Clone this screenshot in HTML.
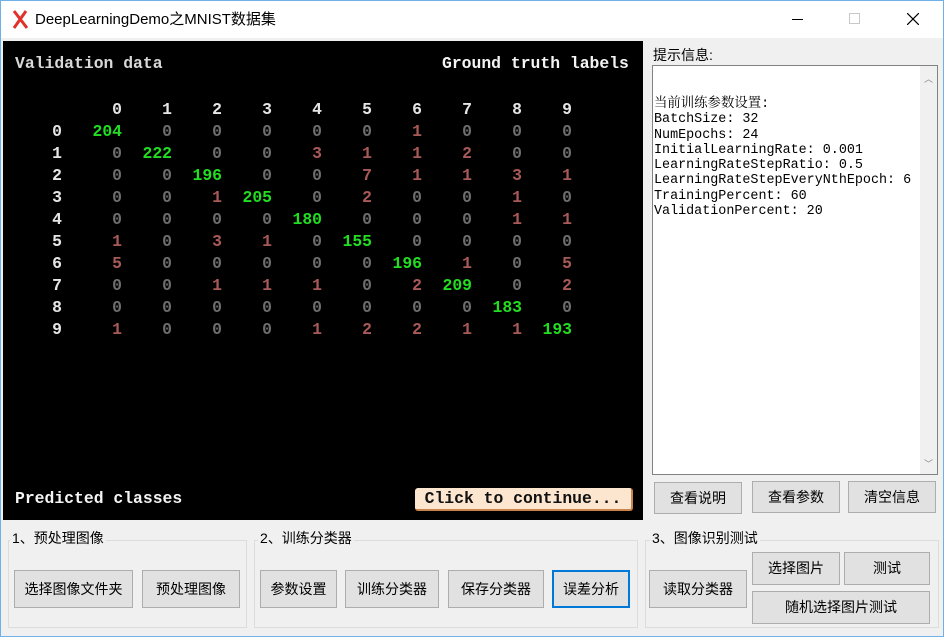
<!DOCTYPE html>
<html><head><meta charset="utf-8"><style>
*{margin:0;padding:0;box-sizing:border-box}
body{width:944px;height:637px;overflow:hidden;background:#f0f0f0;font-family:"Liberation Sans","Noto Sans CJK SC",sans-serif;position:relative;font-size:14px;color:#000}
.win{position:absolute;left:0;top:0;width:944px;height:637px;border:1px solid #6fb0e6}
.title{position:absolute;left:1px;top:1px;width:942px;height:37px;background:#fff}
.abs{position:absolute}
.blk{position:absolute;left:3px;top:41px;width:640px;height:479px;background:#000;font-family:"Liberation Mono",monospace;font-weight:bold;font-size:16.4px}
.row{position:absolute;left:0;height:22px;line-height:22px;white-space:pre}
.row span{position:absolute;width:50px;text-align:right}
.w{color:#e6e6e6}.g{color:#22dd22}.d{color:#6e6e6e}.r{color:#a85a58}
.btn{position:absolute;background:#e1e1e1;border:1px solid #adadad;text-align:center;font-size:14px;color:#000;font-family:"Liberation Sans","Noto Sans CJK SC",sans-serif}
.grp{position:absolute;border:1px solid #dcdcdc}
.gl{position:absolute;background:#f0f0f0;font-size:14px;padding:0 2px;line-height:16px}
</style></head><body>
<div class="win"></div>
<div class="title">
<svg class="abs" style="left:11px;top:9px" width="17" height="19" viewBox="0 0 17 19"><path d="M2 1 L15 18 M14 1 L2 18" stroke="#e0322a" stroke-width="3"/></svg>
<div class="abs" style="left:34px;top:9px;font-size:15px;line-height:20px">DeepLearningDemo之MNIST数据集</div>
<div class="abs" style="left:791px;top:18px;width:11px;height:1px;background:#000"></div>
<div class="abs" style="left:848px;top:12px;width:11px;height:11px;border:1px solid #c8c8c8"></div>
<svg class="abs" style="left:906px;top:12px" width="12" height="12"><path d="M0 0L12 12M12 0L0 12" stroke="#000" stroke-width="1.2"/></svg>
</div>

<div class="blk">
<div class="abs w" style="left:12px;top:13px;color:#d8d8d8">Validation data</div>
<div class="abs w" style="left:439px;top:13px;color:#f4f4f4">Ground truth labels</div>
<div class="abs w" style="left:12px;top:448px;color:#f4f4f4">Predicted classes</div>
<div class="abs" style="left:412px;top:447px;width:218px;height:23px;background:#fde6cf;border-radius:3px;border-right:2px solid #c8844a;border-bottom:2px solid #c8844a;color:#111;text-align:center;line-height:21px">Click to continue...</div>
<div class="row" style="top:58px"><span class="w" style="left:69px">0</span><span class="w" style="left:119px">1</span><span class="w" style="left:169px">2</span><span class="w" style="left:219px">3</span><span class="w" style="left:269px">4</span><span class="w" style="left:319px">5</span><span class="w" style="left:369px">6</span><span class="w" style="left:419px">7</span><span class="w" style="left:469px">8</span><span class="w" style="left:519px">9</span></div>
<div class="row" style="top:80px"><span class="w" style="left:9px">0</span><span class="g" style="left:69px">204</span><span class="d" style="left:119px">0</span><span class="d" style="left:169px">0</span><span class="d" style="left:219px">0</span><span class="d" style="left:269px">0</span><span class="d" style="left:319px">0</span><span class="r" style="left:369px">1</span><span class="d" style="left:419px">0</span><span class="d" style="left:469px">0</span><span class="d" style="left:519px">0</span></div>
<div class="row" style="top:102px"><span class="w" style="left:9px">1</span><span class="d" style="left:69px">0</span><span class="g" style="left:119px">222</span><span class="d" style="left:169px">0</span><span class="d" style="left:219px">0</span><span class="r" style="left:269px">3</span><span class="r" style="left:319px">1</span><span class="r" style="left:369px">1</span><span class="r" style="left:419px">2</span><span class="d" style="left:469px">0</span><span class="d" style="left:519px">0</span></div>
<div class="row" style="top:124px"><span class="w" style="left:9px">2</span><span class="d" style="left:69px">0</span><span class="d" style="left:119px">0</span><span class="g" style="left:169px">196</span><span class="d" style="left:219px">0</span><span class="d" style="left:269px">0</span><span class="r" style="left:319px">7</span><span class="r" style="left:369px">1</span><span class="r" style="left:419px">1</span><span class="r" style="left:469px">3</span><span class="r" style="left:519px">1</span></div>
<div class="row" style="top:146px"><span class="w" style="left:9px">3</span><span class="d" style="left:69px">0</span><span class="d" style="left:119px">0</span><span class="r" style="left:169px">1</span><span class="g" style="left:219px">205</span><span class="d" style="left:269px">0</span><span class="r" style="left:319px">2</span><span class="d" style="left:369px">0</span><span class="d" style="left:419px">0</span><span class="r" style="left:469px">1</span><span class="d" style="left:519px">0</span></div>
<div class="row" style="top:168px"><span class="w" style="left:9px">4</span><span class="d" style="left:69px">0</span><span class="d" style="left:119px">0</span><span class="d" style="left:169px">0</span><span class="d" style="left:219px">0</span><span class="g" style="left:269px">180</span><span class="d" style="left:319px">0</span><span class="d" style="left:369px">0</span><span class="d" style="left:419px">0</span><span class="r" style="left:469px">1</span><span class="r" style="left:519px">1</span></div>
<div class="row" style="top:190px"><span class="w" style="left:9px">5</span><span class="r" style="left:69px">1</span><span class="d" style="left:119px">0</span><span class="r" style="left:169px">3</span><span class="r" style="left:219px">1</span><span class="d" style="left:269px">0</span><span class="g" style="left:319px">155</span><span class="d" style="left:369px">0</span><span class="d" style="left:419px">0</span><span class="d" style="left:469px">0</span><span class="d" style="left:519px">0</span></div>
<div class="row" style="top:212px"><span class="w" style="left:9px">6</span><span class="r" style="left:69px">5</span><span class="d" style="left:119px">0</span><span class="d" style="left:169px">0</span><span class="d" style="left:219px">0</span><span class="d" style="left:269px">0</span><span class="d" style="left:319px">0</span><span class="g" style="left:369px">196</span><span class="r" style="left:419px">1</span><span class="d" style="left:469px">0</span><span class="r" style="left:519px">5</span></div>
<div class="row" style="top:234px"><span class="w" style="left:9px">7</span><span class="d" style="left:69px">0</span><span class="d" style="left:119px">0</span><span class="r" style="left:169px">1</span><span class="r" style="left:219px">1</span><span class="r" style="left:269px">1</span><span class="d" style="left:319px">0</span><span class="r" style="left:369px">2</span><span class="g" style="left:419px">209</span><span class="d" style="left:469px">0</span><span class="r" style="left:519px">2</span></div>
<div class="row" style="top:256px"><span class="w" style="left:9px">8</span><span class="d" style="left:69px">0</span><span class="d" style="left:119px">0</span><span class="d" style="left:169px">0</span><span class="d" style="left:219px">0</span><span class="d" style="left:269px">0</span><span class="d" style="left:319px">0</span><span class="d" style="left:369px">0</span><span class="d" style="left:419px">0</span><span class="g" style="left:469px">183</span><span class="d" style="left:519px">0</span></div>
<div class="row" style="top:278px"><span class="w" style="left:9px">9</span><span class="r" style="left:69px">1</span><span class="d" style="left:119px">0</span><span class="d" style="left:169px">0</span><span class="d" style="left:219px">0</span><span class="r" style="left:269px">1</span><span class="r" style="left:319px">2</span><span class="r" style="left:369px">2</span><span class="r" style="left:419px">1</span><span class="r" style="left:469px">1</span><span class="g" style="left:519px">193</span></div>
</div>

<div class="abs" style="left:653px;top:45px;font-size:14px">提示信息:</div>
<div class="abs" style="left:652px;top:65px;width:286px;height:410px;background:#fff;border:1px solid #828282">
<div class="abs" style="right:0;top:0;width:17px;height:408px;background:#f0f0f0"></div>
<div class="abs" style="right:4px;top:6px;font-size:9px;color:#888">︿</div>
<div class="abs" style="right:4px;bottom:4px;font-size:9px;color:#888">﹀</div>
<div class="abs" style="left:1px;top:31px;font-family:'Liberation Mono','Noto Serif CJK SC',monospace;font-size:13.4px;line-height:15.3px;white-space:pre;color:#000">当前训练参数设置:
BatchSize: 32
NumEpochs: 24
InitialLearningRate: 0.001
LearningRateStepRatio: 0.5
LearningRateStepEveryNthEpoch: 6
TrainingPercent: 60
ValidationPercent: 20</div>
</div>
<div class="btn" style="left:654px;top:482px;width:88px;height:32px;line-height:30px">查看说明</div>
<div class="btn" style="left:752px;top:481px;width:88px;height:32px;line-height:30px">查看参数</div>
<div class="btn" style="left:848px;top:481px;width:88px;height:32px;line-height:30px">清空信息</div>

<div class="grp" style="left:8px;top:540px;width:239px;height:88px"></div>
<div class="gl" style="left:10px;top:530px">1、预处理图像</div>
<div class="btn" style="left:14px;top:570px;width:119px;height:38px;line-height:36px">选择图像文件夹</div>
<div class="btn" style="left:142px;top:570px;width:98px;height:38px;line-height:36px">预处理图像</div>

<div class="grp" style="left:254px;top:540px;width:384px;height:88px"></div>
<div class="gl" style="left:258px;top:530px">2、训练分类器</div>
<div class="btn" style="left:260px;top:570px;width:77px;height:38px;line-height:36px">参数设置</div>
<div class="btn" style="left:345px;top:570px;width:94px;height:38px;line-height:36px">训练分类器</div>
<div class="btn" style="left:448px;top:570px;width:96px;height:38px;line-height:36px">保存分类器</div>
<div class="btn" style="left:552px;top:570px;width:78px;height:38px;line-height:34px;border:2px solid #0078d7">误差分析</div>

<div class="grp" style="left:645px;top:540px;width:294px;height:88px"></div>
<div class="gl" style="left:650px;top:530px">3、图像识别测试</div>
<div class="btn" style="left:649px;top:570px;width:98px;height:38px;line-height:36px">读取分类器</div>
<div class="btn" style="left:752px;top:552px;width:88px;height:33px;line-height:31px">选择图片</div>
<div class="btn" style="left:844px;top:552px;width:86px;height:33px;line-height:31px">测试</div>
<div class="btn" style="left:752px;top:591px;width:178px;height:33px;line-height:31px">随机选择图片测试</div>
</body></html>
